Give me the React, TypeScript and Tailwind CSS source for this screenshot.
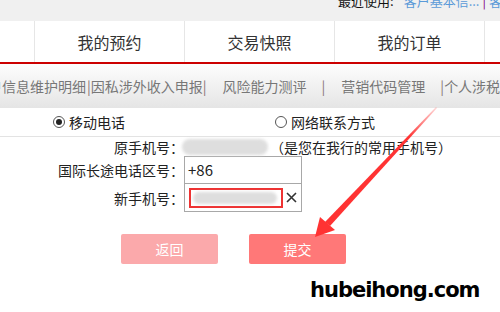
const CJK = { fontFamily: '"Microsoft YaHei", "Noto Sans CJK SC", "Liberation Sans", sans-serif' };

const tabs = ["我的预约", "交易快照", "我的订单"];

function Blur({ className }: { className: string }) {
  return <div className={`rounded-full bg-[#dedede] blur-[1.5px] ${className}`} />;
}

function Radio({ checked }: { checked?: boolean }) {
  return (
    <span className="flex h-[12px] w-[12px] items-center justify-center rounded-full border border-[#555] bg-white">
      {checked && <span className="h-[6px] w-[6px] rounded-full bg-[#222]" />}
    </span>
  );
}

export default function App() {
  return (
    <div className="relative h-[312px] w-[500px] overflow-hidden bg-white text-[#333]" style={CJK}>
      {/* top bar */}
      <div className="flex h-[21px] flex-col bg-[#f0f0f0]">
        <div className="-mt-[6px] flex whitespace-nowrap pl-[338px] text-[13px] leading-[13px]">
          <span className="text-[#111]">最近使用:</span>
          <span className="ml-[10px] text-[#5a9ad8]">客户基本信...</span>
          <span className="mx-[3px] text-[#800080]">|</span>
          <span className="text-[#5a9ad8]">客户基本</span>
        </div>
      </div>

      {/* tabs */}
      <div className="flex h-[43px] border-b-2 border-[#cc0000] bg-white">
        <div className="w-[34px] shrink-0" />
        {tabs.map((t) => (
          <div
            key={t}
            className="flex w-[150px] shrink-0 items-center justify-center border-l border-[#e6e6e6] text-[16px] text-[#333]"
          >
            {t}
          </div>
        ))}
        <div className="flex-1 border-l border-[#e6e6e6]" />
      </div>

      {/* sub menu */}
      <div className="flex h-[44px] items-center whitespace-nowrap bg-gradient-to-b from-[#fdfdfd] to-[#e5e5e5] text-[14px] text-[#777]">
        <span className="-ml-[12px]">户信息维护明细</span>
        <span className="ml-[1px] text-[#8a7575]">|</span>
        <span>因私涉外收入申报</span>
        <span className="text-[#8a7575]">|</span>
        <span className="ml-[16px]">风险能力测评</span>
        <span className="ml-[15px] text-[#8a7575]">|</span>
        <span className="ml-[16px]">营销代码管理</span>
        <span className="ml-[15px] text-[#8a7575]">|</span>
        <span>个人涉税信息</span>
      </div>

      {/* radios */}
      <div className="flex h-[29px] items-center border-b border-[#e3e3e3] text-[14px] text-[#222]">
        <div className="ml-[53px] flex items-center gap-[4px]">
          <Radio checked />
          <span>移动电话</span>
        </div>
        <div className="ml-[150px] flex items-center gap-[4px]">
          <Radio />
          <span>网络联系方式</span>
        </div>
      </div>

      {/* form */}
      <div className="mt-[1px] grid grid-cols-[184px_1fr] text-[14px] text-[#222]">
        <div className="flex h-[18px] items-center justify-end">原手机号：</div>
        <div className="flex h-[18px] items-center">
          <Blur className="-ml-[2px] h-[16px] w-[86px]" />
          <span className="ml-[2px]">（是您在我行的常用手机号）</span>
        </div>

        <div className="flex h-[28px] items-center justify-end">国际长途电话区号：</div>
        <div className="flex h-[28px] w-[118px] items-center border border-[#a8a8a8] pl-[3px] text-[15px]">+86</div>

        <div className="flex h-[28px] items-center justify-end">新手机号：</div>
        <div className="flex h-[28px] w-[118px] items-center border border-t-0 border-[#a8a8a8] pl-[4px]">
          <div className="flex h-[20px] w-[94px] items-center border-2 border-[#ee3333] pl-[2px]">
            <Blur className="h-[12px] w-[84px]" />
          </div>
          <svg className="ml-[3px]" width="11" height="11" viewBox="0 0 11 11">
            <path d="M1 1L10 10M10 1L1 10" stroke="#333" strokeWidth="1.6" />
          </svg>
        </div>
      </div>

      {/* buttons */}
      <div className="mt-[22px] flex gap-[31px] pl-[121px] text-[14px] text-white">
        <button className="h-[30px] w-[97px] rounded-[2px] bg-[#fba9ab]">返回</button>
        <button className="h-[30px] w-[97px] rounded-[2px] bg-[#ff7878]">提交</button>
      </div>

      {/* watermark */}
      <div
        className="absolute left-[310px] top-[275px] text-[21px] font-bold tracking-[-1px] text-black"
        style={{ fontFamily: '"DejaVu Sans", sans-serif' }}
      >
        hubeihong.com
      </div>

      {/* arrow */}
      <svg className="pointer-events-none absolute left-0 top-0" width="500" height="312" viewBox="0 0 500 312">
        <defs>
          <linearGradient id="fade" x1="436" y1="107" x2="325" y2="226" gradientUnits="userSpaceOnUse">
            <stop offset="0" stopColor="#ff3b3b" stopOpacity="0.2" />
            <stop offset="0.25" stopColor="#f33" stopOpacity="1" />
            <stop offset="1" stopColor="#f33" stopOpacity="1" />
          </linearGradient>
        </defs>
        <polygon points="436,107 437,108 330,226 325,222" fill="url(#fade)" />
        <polygon points="315,237 320,217 335,230" fill="#f33" />
      </svg>
    </div>
  );
}
